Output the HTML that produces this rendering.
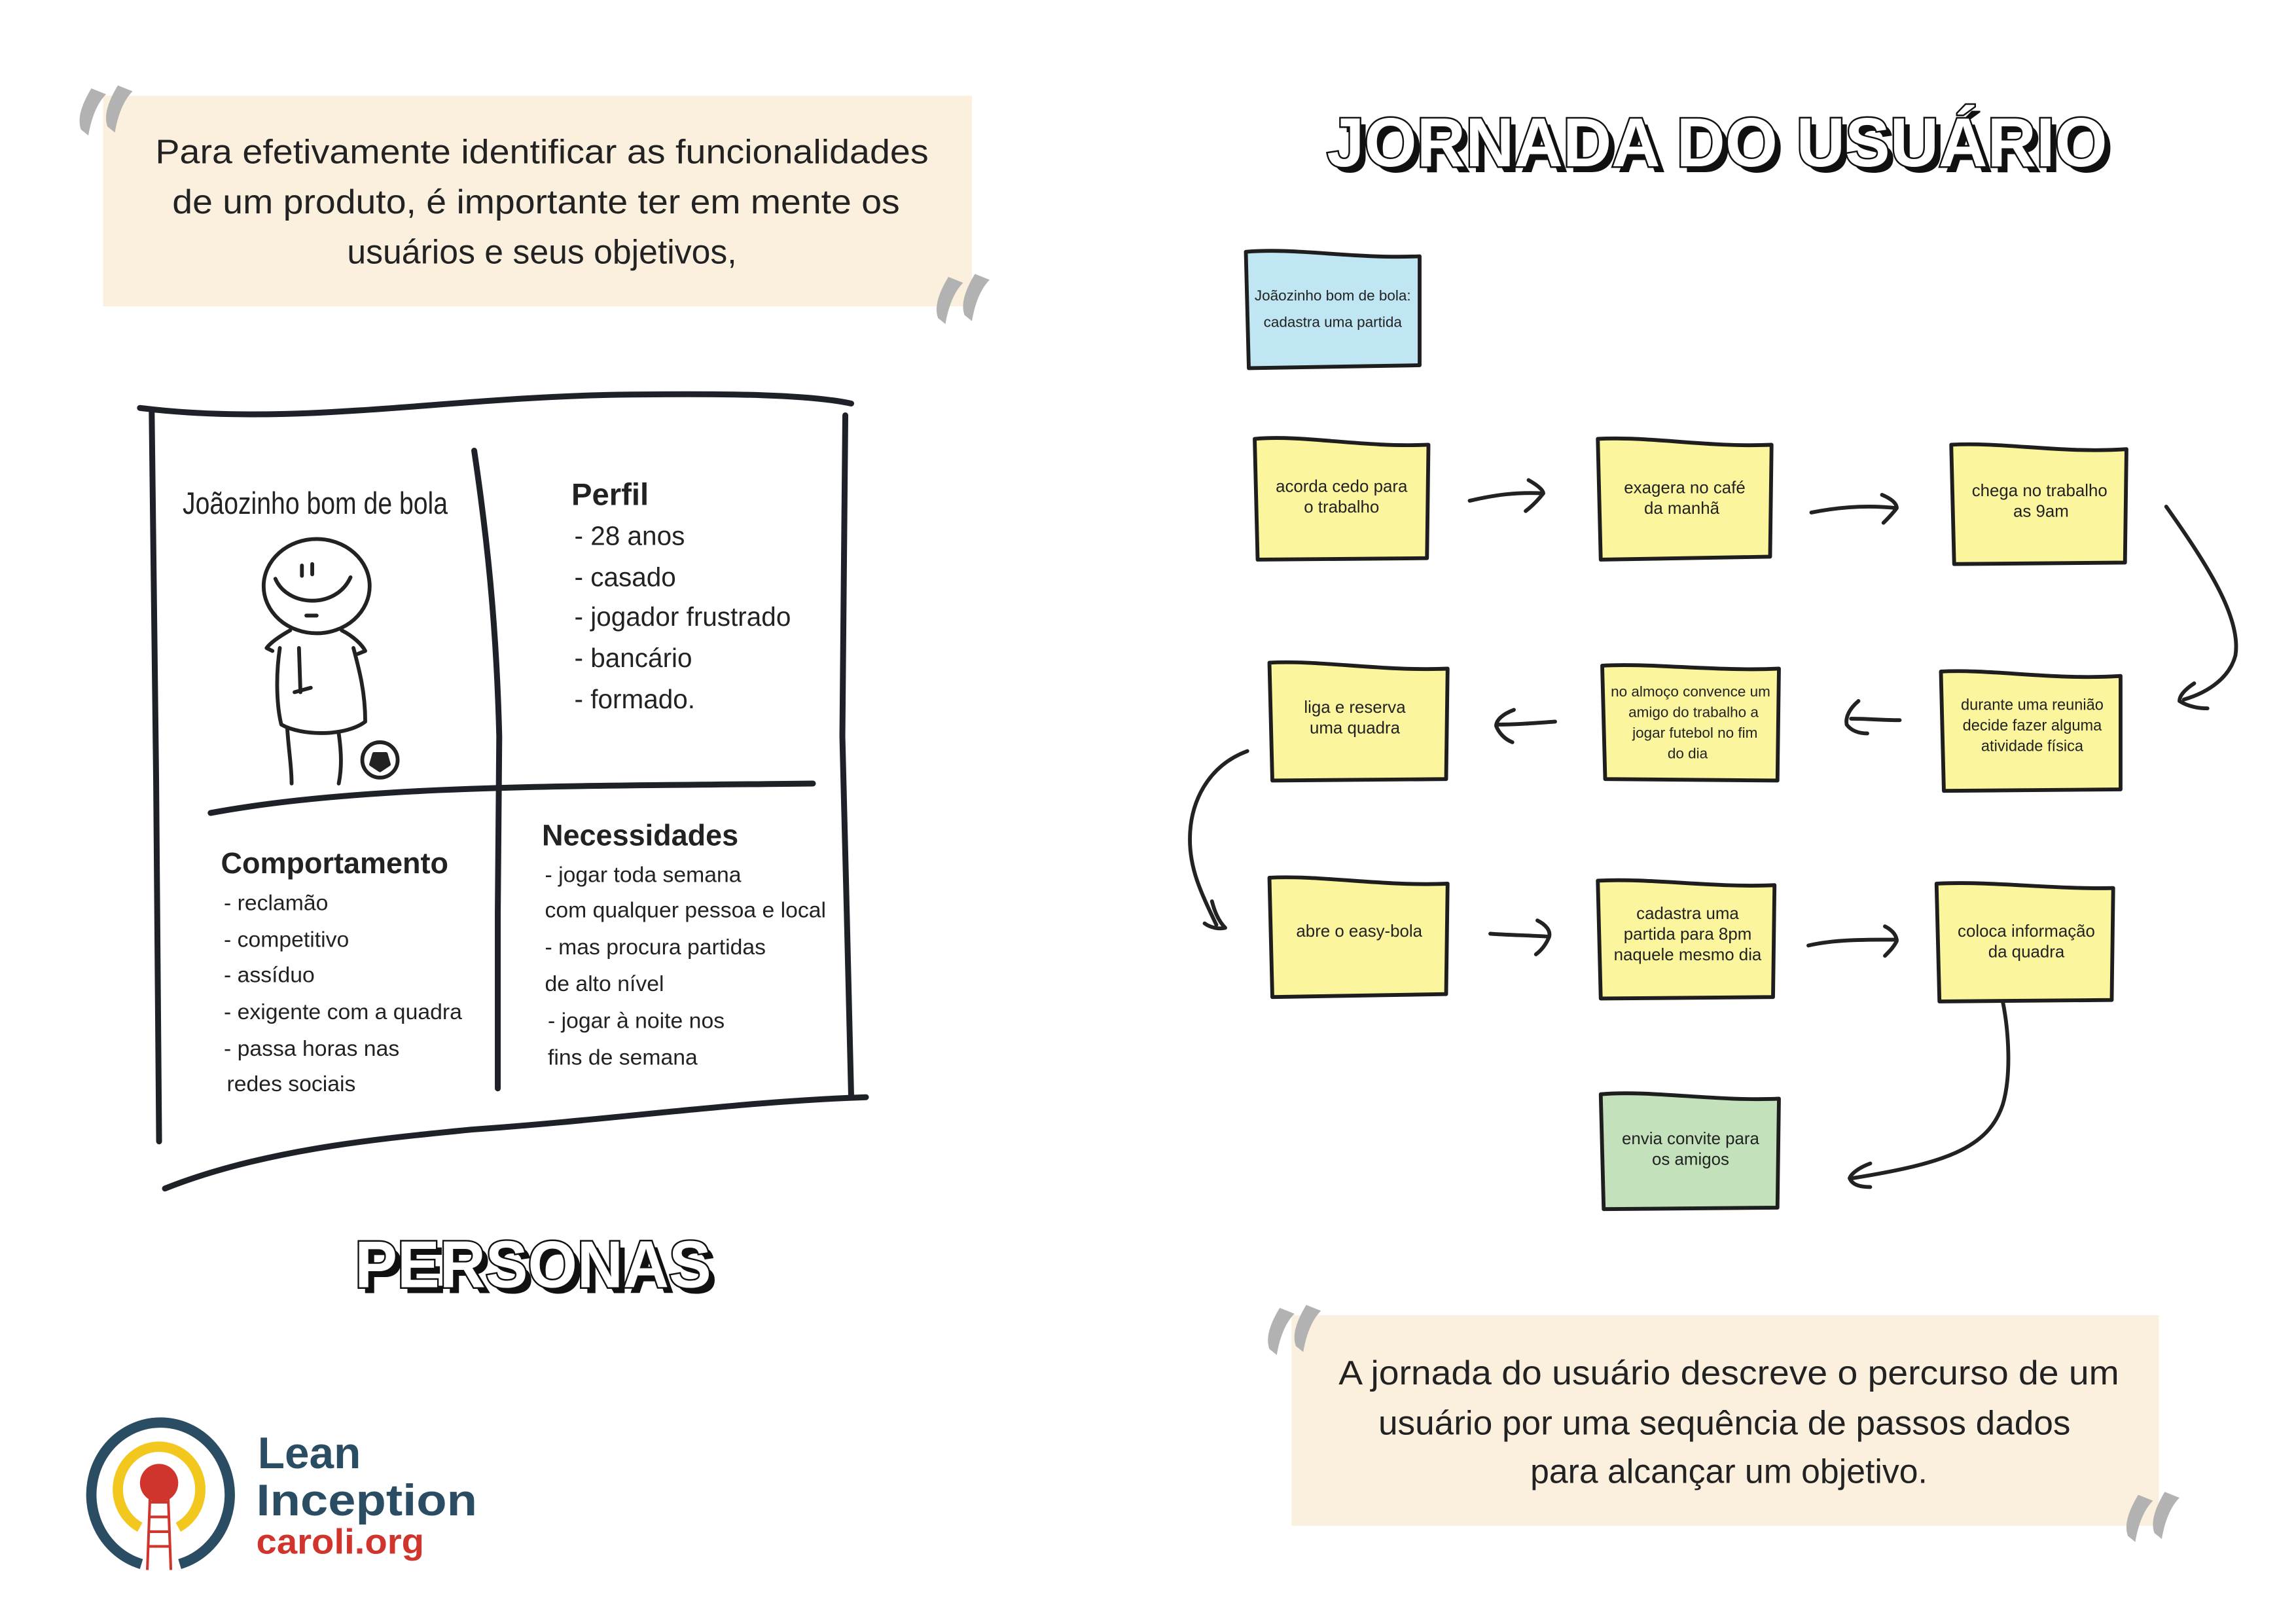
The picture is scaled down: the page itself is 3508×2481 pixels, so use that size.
<!DOCTYPE html>
<html><head><meta charset="utf-8"><style>
html,body{margin:0;padding:0;background:#fff}
svg{display:block}
.h{font-family:"Liberation Sans Narrow","Liberation Sans",sans-serif;fill:#222}
.t{font-family:"Liberation Sans",sans-serif;font-weight:bold;fill:#fff;stroke:#111;stroke-width:2.2;paint-order:stroke}
.sh{font-family:"Liberation Sans",sans-serif;font-weight:bold;fill:#111}
.ln{fill:none;stroke:#1e2228;stroke-width:4;stroke-linecap:round;stroke-linejoin:round}
.ar{fill:none;stroke:#222;stroke-width:2.6;stroke-linecap:round;stroke-linejoin:round}
.st{stroke:#1e1e1e;stroke-width:2.6;stroke-linejoin:round}
</style></head><body>
<svg width="3508" height="2481" viewBox="0 0 1559.1 1102.7" xmlns="http://www.w3.org/2000/svg">
<rect width="1559.1" height="1102.7" fill="#fff"/>

<rect x="70" y="65" width="590" height="143" fill="#fbf0de"/>
<text class="h" font-size="23" text-anchor="middle"><tspan x="368" y="111" textLength="525" lengthAdjust="spacingAndGlyphs">Para efetivamente identificar as funcionalidades</tspan><tspan x="364" y="145" textLength="494" lengthAdjust="spacingAndGlyphs">de um produto, é importante ter em mente os</tspan><tspan x="368" y="179">usuários e seus objetivos,</tspan></text>
<g fill="#b2b2b2">
<path d="M62 60 C56 70 52 80 55 88 L60 92 C62 80 66 70 72 64 Z"/><path d="M80 58 C74 68 70 78 73 86 L78 90 C80 78 84 68 90 62 Z"/>
<path d="M644 188 C638 198 634 208 637 216 L642 220 C644 208 648 198 654 192 Z"/><path d="M662 186 C656 196 652 206 655 214 L660 218 C662 206 666 196 672 190 Z"/>
</g>

<path class="ln" d="M95 277 C200 290 300 270 420 268 C500 267 550 268 578 274"/>
<path class="ln" d="M103 280 L106 530 L108 775"/>
<path class="ln" d="M574 282 L572 500 L575 620 L578 745"/>
<path class="ln" d="M112 807 C180 780 260 773 320 767 C420 760 500 748 588 745"/>
<path class="ln" d="M322 306 C330 360 337 420 339 500 L338 620 L338 739"/>
<path class="ln" d="M143 552 C250 532 400 534 552 532"/>

<text class="h" font-size="21" x="124" y="349" textLength="180" lengthAdjust="spacingAndGlyphs">Joãozinho bom de bola</text>
<text class="h" font-size="21" x="388" y="343" font-weight="bold">Perfil</text>
<text class="h" font-size="18"><tspan x="390" y="370">- 28 anos</tspan><tspan x="390" y="398">- casado</tspan><tspan x="390" y="425">- jogador frustrado</tspan><tspan x="390" y="453">- bancário</tspan><tspan x="390" y="481">- formado.</tspan></text>
<text class="h" font-size="20" x="150" y="593" font-weight="bold">Comportamento</text>
<text class="h" font-size="15"><tspan x="152" y="618">- reclamão</tspan><tspan x="152" y="643">- competitivo</tspan><tspan x="152" y="667">- assíduo</tspan><tspan x="152" y="692">- exigente com a quadra</tspan><tspan x="152" y="717">- passa horas nas</tspan><tspan x="154" y="741">redes sociais</tspan></text>
<text class="h" font-size="20" x="368" y="574" font-weight="bold">Necessidades</text>
<text class="h" font-size="15"><tspan x="370" y="599">- jogar toda semana</tspan><tspan x="370" y="623">com qualquer pessoa e local</tspan><tspan x="370" y="648">- mas procura partidas</tspan><tspan x="370" y="673">de alto nível</tspan><tspan x="372" y="698">- jogar à noite nos</tspan><tspan x="372" y="723">fins de semana</tspan></text>

<g class="ar" stroke-width="2.4">
<ellipse cx="215" cy="398" rx="36" ry="32"/>
<path d="M205 384 L205 391 M212 383 L212 390"/>
<path d="M187 393 C195 412 228 414 238 392"/>
<path d="M208 418 L215 418"/>
<path d="M197 428 C190 432 184 436 181 440 L185 442 M232 428 C240 432 246 438 248 442 L243 444"/>
<path d="M190 440 C187 460 188 480 191 492 C205 500 235 500 248 490 C248 470 244 455 240 440"/>
<path d="M203 440 L204 470 M200 470 L211 467"/>
<path d="M195 494 C196 510 198 520 198 532 M230 498 C232 512 232 522 230 532"/>
<circle cx="258" cy="516" r="12"/>
<path d="M254 512 L262 512 L264 519 L258 523 L252 519 Z" fill="#222"/>
</g>

<text class="sh" font-size="45" x="245" y="878" textLength="242" lengthAdjust="spacingAndGlyphs">PERSONAS</text>
<text class="t" font-size="45" x="241" y="874" textLength="242" lengthAdjust="spacingAndGlyphs">PERSONAS</text>

<path d="M96 1062 A47 49 0 1 1 122 1062" fill="none" stroke="#2b4d63" stroke-width="7"/>
<path d="M95 1037 A28 29 0 1 1 121 1037" fill="none" stroke="#f2c81f" stroke-width="7"/>
<circle cx="108" cy="1007" r="13" fill="#d0352d"/>
<g stroke="#d0352d" stroke-width="1.8" fill="none"><path d="M102 1012 L100 1066 M114 1012 L116 1066 M101 1020 L115 1020 M101 1030 L115 1030 M101 1040 L115 1040 M101 1050 L115 1050"/></g>
<text font-family="Liberation Sans,sans-serif" font-size="30" font-weight="bold" fill="#2b4d63"><tspan x="175" y="997">Lean</tspan><tspan x="174" y="1029" textLength="150" lengthAdjust="spacingAndGlyphs">Inception</tspan></text>
<text font-family="Liberation Sans,sans-serif" font-size="24" font-weight="bold" fill="#d0352d" x="174" y="1055" textLength="114" lengthAdjust="spacingAndGlyphs">caroli.org</text>

<text class="sh" font-size="47" x="905" y="117" textLength="530" lengthAdjust="spacingAndGlyphs">JORNADA DO USUÁRIO</text>
<text class="t" font-size="47" x="901" y="113" textLength="530" lengthAdjust="spacingAndGlyphs">JORNADA DO USUÁRIO</text>

<g class="st">
<path fill="#bfe6f2" d="M846 171 C880 168 920 176 964 174 L964 248 L848 250 Z"/>
<path fill="#fbf59e" d="M852 298 C885 295 925 304 970 302 L969 379 L854 380 Z"/>
<path fill="#fbf59e" d="M1085 298 C1120 296 1160 304 1203 302 L1202 378 L1087 380 Z"/>
<path fill="#fbf59e" d="M1325 302 C1360 300 1400 308 1444 305 L1443 382 L1327 383 Z"/>
<path fill="#fbf59e" d="M862 450 C895 448 940 456 983 454 L982 529 L864 530 Z"/>
<path fill="#fbf59e" d="M1088 452 C1120 450 1165 456 1208 454 L1207 530 L1090 529 Z"/>
<path fill="#fbf59e" d="M1318 456 C1350 454 1395 462 1440 459 L1440 536 L1320 537 Z"/>
<path fill="#fbf59e" d="M862 596 C895 594 940 602 983 600 L982 675 L864 677 Z"/>
<path fill="#fbf59e" d="M1085 598 C1120 596 1165 603 1205 601 L1204 677 L1087 678 Z"/>
<path fill="#fbf59e" d="M1315 600 C1350 598 1395 604 1435 603 L1434 679 L1317 680 Z"/>
<path fill="#c3e2bb" d="M1087 743 C1120 740 1165 748 1208 746 L1207 820 L1089 821 Z"/>
</g>
<g class="h" font-size="11.5" text-anchor="middle">
<text x="905" y="204" font-size="10">Joãozinho bom de bola:</text><text x="905" y="222" font-size="10">cadastra uma partida</text>
<text x="911" y="334">acorda cedo para</text><text x="911" y="348">o trabalho</text>
<text x="1144" y="335">exagera no café</text><text x="1142" y="349">da manhã</text>
<text x="1385" y="337">chega no trabalho</text><text x="1386" y="351">as 9am</text>
<text x="920" y="484">liga e reserva</text><text x="920" y="498">uma quadra</text>
<text x="1148" y="473" font-size="10">no almoço convence um</text><text x="1150" y="487" font-size="10">amigo do trabalho a</text><text x="1151" y="501" font-size="10">jogar futebol no fim</text><text x="1146" y="515" font-size="10">do dia</text>
<text x="1380" y="482" font-size="10.5">durante uma reunião</text><text x="1380" y="496" font-size="10.5">decide fazer alguma</text><text x="1380" y="510" font-size="10.5">atividade física</text>
<text x="923" y="636">abre o easy-bola</text>
<text x="1146" y="624">cadastra uma</text><text x="1146" y="638">partida para 8pm</text><text x="1146" y="652">naquele mesmo dia</text>
<text x="1376" y="636">coloca informação</text><text x="1376" y="650">da quadra</text>
<text x="1148" y="777">envia convite para</text><text x="1148" y="791">os amigos</text>
</g>

<g class="ar">
<path d="M998 340 C1015 336 1030 334 1048 335 M1038 326 C1045 330 1048 333 1048 335 C1044 340 1040 344 1036 347"/>
<path d="M1230 348 C1250 344 1270 343 1288 345 M1278 336 C1285 339 1288 342 1288 345 C1285 349 1282 352 1279 355"/>
<path d="M1471 344 C1500 385 1522 420 1518 445 C1514 460 1500 470 1483 475 M1490 464 C1484 468 1480 472 1480 476 C1486 480 1494 481 1499 481"/>
<path d="M1056 490 C1042 491 1030 492 1016 492 M1028 482 C1020 485 1016 489 1016 493 C1018 498 1022 502 1027 504"/>
<path d="M1290 489 C1278 489 1268 488 1257 488 M1262 476 C1256 481 1253 487 1254 492 C1257 496 1262 498 1268 498"/>
<path d="M847 510 C820 520 808 545 808 570 C808 590 815 605 826 628 M823 612 C825 620 828 626 832 630 C828 631 822 630 818 627"/>
<path d="M1012 634 C1025 635 1038 635 1052 636 M1044 625 C1050 628 1053 632 1052 636 C1050 641 1047 645 1043 648"/>
<path d="M1228 642 C1245 638 1265 638 1288 638 M1280 629 C1286 632 1288 636 1288 639 C1286 643 1283 646 1280 649"/>
<path d="M1360 680 C1364 700 1366 730 1360 750 C1350 780 1320 790 1258 800 M1270 790 C1262 793 1257 797 1256 800 C1258 805 1264 806 1270 806"/>
</g>

<rect x="877" y="893" width="589" height="143" fill="#fbf0de"/>
<text class="h" font-size="23" text-anchor="middle"><tspan x="1174" y="940" textLength="530" lengthAdjust="spacingAndGlyphs">A jornada do usuário descreve o percurso de um</tspan><tspan x="1171" y="974" textLength="470" lengthAdjust="spacingAndGlyphs">usuário por uma sequência de passos dados</tspan><tspan x="1174" y="1007">para alcançar um objetivo.</tspan></text>
<g fill="#b2b2b2">
<path d="M869 888 C863 898 859 908 862 916 L867 920 C869 908 873 898 879 892 Z"/><path d="M887 886 C881 896 877 906 880 914 L885 918 C887 906 891 896 897 890 Z"/>
<path d="M1452 1015 C1446 1025 1442 1035 1445 1043 L1450 1047 C1452 1035 1456 1025 1462 1019 Z"/><path d="M1470 1013 C1464 1023 1460 1033 1463 1041 L1468 1045 C1470 1033 1474 1023 1480 1017 Z"/>
</g>
</svg>
</body></html>
